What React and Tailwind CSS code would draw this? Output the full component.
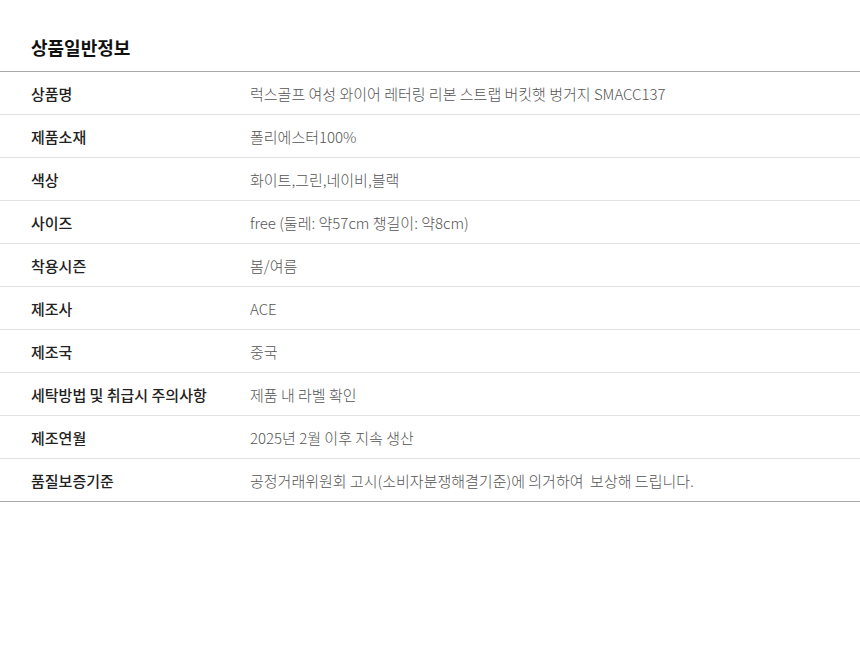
const rows = [
  ["상품명", "럭스골프 여성 와이어 레터링 리본 스트랩 버킷햇 벙거지 SMACC137"],
  ["제품소재", "폴리에스터100%"],
  ["색상", "화이트,그린,네이비,블랙"],
  ["사이즈", "free (둘레: 약57cm 챙길이: 약8cm)"],
  ["착용시즌", "봄/여름"],
  ["제조사", "ACE"],
  ["제조국", "중국"],
  ["세탁방법 및 취급시 주의사항", "제품 내 라벨 확인"],
  ["제조연월", "2025년 2월 이후 지속 생산"],
  ["품질보증기준", "공정거래위원회 고시(소비자분쟁해결기준)에 의거하여  보상해 드립니다."],
];

export default function App() {
  return (
    <div
      className="w-[860px] h-[653px] bg-white"
      style={{ fontFamily: '"Noto Sans CJK KR", "Noto Sans", sans-serif' }}
    >
      <div className="pt-[34px] pb-[11px] pl-[31px] text-[18px] leading-[26px] font-bold text-[#111]">
        상품일반정보
      </div>
      <div className="border-t border-[#a8a8a8]">
        {rows.map(([k, v], i) => (
          <div
            key={k}
            className={`flex items-center pt-[1px] h-[43px] border-b ${
              i === rows.length - 1 ? "border-[#a8a8a8]" : "border-[#e2e2e2]"
            } text-[15px] leading-[20px]`}
          >
            <div className="w-[250px] pl-[31px] font-medium text-[#222] shrink-0">{k}</div>
            <div className="font-light text-[#555] whitespace-pre">{v}</div>
          </div>
        ))}
      </div>
    </div>
  );
}
